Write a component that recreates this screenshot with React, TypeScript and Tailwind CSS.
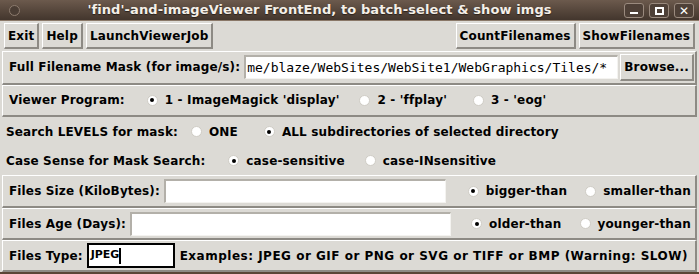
import React from 'react';

const face = "font-['DejaVu_Sans',sans-serif] font-bold";

const Radio = ({ on }: { on?: boolean }) => (
  <span className="w-[11px] h-[11px] rounded-full bg-white border border-[#cfccc5] flex items-center justify-center shrink-0">
    {on && <span className="w-[4px] h-[4px] rounded-full bg-black" />}
  </span>
);

const Choice = ({ on, label, className = '' }: { on?: boolean; label: string; className?: string }) => (
  <span className={`flex items-center gap-[7px] ${className}`}>
    <Radio on={on} />
    <span>{label}</span>
  </span>
);

const Btn = ({ children, className = '' }: { children: React.ReactNode; className?: string }) => (
  <button className={`h-[26px] px-[3px] bg-[#dcdad5] border-t border-l border-t-white border-l-white border-b-2 border-r-2 border-b-[#8d8a84] border-r-[#8d8a84] text-black whitespace-nowrap ${className}`}>
    {children}
  </button>
);

const Frame = ({ children, className = '' }: { children: React.ReactNode; className?: string }) => (
  <div className={`mx-[2px] flex items-center border-t border-l border-t-white border-l-white border-b-2 border-r-2 border-b-[#8d8a84] border-r-[#8d8a84] ${className}`}>
    {children}
  </div>
);

const Entry = ({ value = '', className = '' }: { value?: string; className?: string }) => (
  <div className={`h-[24px] bg-white border-t-2 border-l-2 border-t-[#b3b0a9] border-l-[#b3b0a9] border-b border-r border-b-[#f4f3f0] border-r-[#f4f3f0] flex items-center overflow-hidden ${className}`}>
    <span className="font-['DejaVu_Sans_Mono',monospace] text-[13px] font-normal tracking-normal pl-[1px] whitespace-nowrap">{value}</span>
  </div>
);

const App: React.FC = () => {
  return (
    <div className={`w-[699px] h-[274px] bg-[#dcdad5] text-[12px] tracking-[0.15px] text-black ${face} overflow-hidden flex flex-col border-b-2 border-b-[#5a4536]`}>
      {/* Title bar */}
      <div className="h-[21px] shrink-0 relative flex items-center justify-center pr-[60px] bg-gradient-to-b from-[#6c5a4d] to-[#43362d] border-b border-b-[#8a7868]">
        <span className="absolute left-[9px] top-[5px] w-[11px] h-[11px] rounded-full bg-[#4a3d34] border border-[#8c7b6e]" />
        <span className="text-[#f4efe8] text-[13px] tracking-[0.1px] [text-shadow:0_1px_1px_#2a201a]">
          'find'-and-imageViewer FrontEnd, to batch-select &amp; show imgs
        </span>
        <div className="absolute right-[5px] top-[3px] flex gap-[5px]">
          <span className="w-[20px] h-[15px] rounded-[3px] border border-[#9a8a7e] bg-[#4e4037] flex items-end justify-center pb-[3px]">
            <span className="w-[8px] h-[2px] bg-white" />
          </span>
          <span className="w-[20px] h-[15px] rounded-[3px] border border-[#9a8a7e] bg-[#4e4037] flex items-center justify-center">
            <span className="w-[9px] h-[8px] border-2 border-white" />
          </span>
          <span className="w-[20px] h-[15px] rounded-[3px] border border-[#9a8a7e] bg-[#4e4037] flex items-center justify-center text-white text-[12px] leading-none">
            ✕
          </span>
        </div>
      </div>

      {/* Button row */}
      <div className="h-[30px] shrink-0 flex items-center px-[4px] gap-[3px]">
        <Btn>Exit</Btn>
        <Btn>Help</Btn>
        <Btn>LaunchViewerJob</Btn>
        <div className="flex-1" />
        <Btn>CountFilenames</Btn>
        <Btn>ShowFilenames</Btn>
      </div>

      {/* Filename mask */}
      <Frame className="h-[34px] pl-[6px] pr-[1px]">
        <span className="whitespace-nowrap">Full Filename Mask (for image/s):</span>
        <Entry className="flex-1 ml-[4px]" value="me/blaze/WebSites/WebSite1/WebGraphics/Tiles/*" />
        <Btn className="ml-[2px] h-[27px]">Browse...</Btn>
      </Frame>

      {/* Viewer program */}
      <Frame className="h-[32px] pl-[6px] whitespace-nowrap">
        <span>Viewer Program:</span>
        <Choice on label="1 - ImageMagick 'display'" className="ml-[22px]" />
        <Choice label="2 - 'ffplay'" className="ml-[20px]" />
        <Choice label="3 - 'eog'" className="ml-[26px]" />
      </Frame>

      {/* Search levels */}
      <div className="h-[30px] shrink-0 flex items-center pl-[6px] whitespace-nowrap">
        <span>Search LEVELS for mask:</span>
        <Choice label="ONE" className="ml-[13px]" />
        <Choice on label="ALL subdirectories of selected directory" className="ml-[26px]" />
      </div>

      {/* Case sense */}
      <div className="h-[28px] shrink-0 flex items-center pl-[6px] whitespace-nowrap">
        <span>Case Sense for Mask Search:</span>
        <Choice on label="case-sensitive" className="ml-[23px]" />
        <Choice label="case-INsensitive" className="ml-[20px]" />
      </div>

      {/* File size */}
      <Frame className="h-[34px] pl-[6px] pr-[4px] whitespace-nowrap">
        <span>Files Size (KiloBytes):</span>
        <Entry className="flex-1 ml-[4px] mr-[22px]" />
        <Choice on label="bigger-than" />
        <Choice label="smaller-than" className="ml-[18px]" />
      </Frame>

      {/* File age */}
      <Frame className="h-[32px] pl-[6px] pr-[4px] whitespace-nowrap">
        <span>Files Age (Days):</span>
        <Entry className="flex-1 ml-[4px] mr-[20px]" />
        <Choice on label="older-than" />
        <Choice label="younger-than" className="ml-[18px]" />
      </Frame>

      {/* File type */}
      <Frame className="h-[32px] pl-[6px] whitespace-nowrap">
        <span>Files Type:</span>
        <div className="ml-[4px] w-[88px] h-[25px] bg-white border-2 border-black flex items-center">
          <span className="font-['DejaVu_Sans',sans-serif] font-bold text-[11px] tracking-normal pl-[2px]">JPEG</span>
          <span className="w-[2px] h-[16px] bg-black" />
        </div>
        <span className="ml-[5px] tracking-[0.5px]">Examples: JPEG or GIF or PNG or SVG or TIFF or BMP (Warning: SLOW)</span>
      </Frame>
    </div>
  );
};

export default App;
